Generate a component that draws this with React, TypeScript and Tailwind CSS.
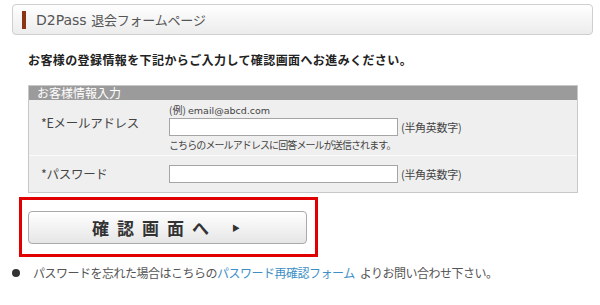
import React from "react";

const jp = { fontFamily: '"Noto Sans CJK JP", "DejaVu Sans", sans-serif' };

function Row({ label, children, last, labelPad }: { label: string; children: React.ReactNode; last?: boolean; labelPad: string }) {
    return (
        <div className={`flex ${last ? "" : "border-b border-[#fbfbfb]"}`}>
            <div className={`w-[140px] pl-[12px] text-[12.5px] leading-[16px] tracking-[-0.3px] text-[#444] ${labelPad}`}>{label}</div>
            <div className="flex-1">{children}</div>
        </div>
    );
}

function Field() {
    return (
        <div className="flex items-center">
            <input className="w-[229px] h-[18px] bg-white border border-[#a5a5a5] outline-none" />
            <span className="ml-[3px] text-[11px] text-[#444] tracking-[-0.3px]">(半角英数字)</span>
        </div>
    );
}

export default function App() {
    return (
        <div className="w-[600px] h-[305px] bg-white overflow-hidden pt-[4px]" style={jp}>
            {/* page title */}
            <div className="ml-[12px] w-[581px] h-[31px] border border-[#cfcfcf] rounded-[4px] bg-gradient-to-b from-white to-[#ececec] flex items-center">
                <div className="ml-[9px] w-[4px] h-[18px] bg-[#8b3416]" />
                <div className="ml-[10px] text-[13px] text-[#555] leading-none tracking-[-0.2px]">
                    <span style={{ fontFamily: '"DejaVu Sans", sans-serif' }} className="text-[14px] tracking-normal">D2Pass </span>
                    退会フォームページ
                </div>
            </div>

            <p className="ml-[28px] mt-[18px] h-[14px] leading-[14px] text-[12px] font-bold tracking-[0.4px] text-[#222]">
                お客様の登録情報を下記からご入力して確認画面へお進みください。
            </p>

            {/* form table */}
            <div className="ml-[28px] mt-[18px] w-[550px] border border-[#c8c8c8] bg-[#efefef]">
                <div className="h-[14px] bg-[#9b9b9b] text-white text-[12px] leading-[14px] pl-[8px]">お客様情報入力</div>
                <Row label="*Eメールアドレス" labelPad="pt-[15px]">
                    <div className="pt-[3px] pb-[3px]">
                        <div className="text-[10px] leading-[14px] text-[#444]">
                            (例) <span style={{ fontFamily: '"DejaVu Sans", sans-serif' }} className="text-[9.5px]">email@abcd.com</span>
                        </div>
                        <Field />
                        <div className="mt-[2px] text-[10px] leading-[14px] tracking-[-0.9px] text-[#444]">
                            こちらのメールアドレスに回答メールが送信されます。
                        </div>
                    </div>
                </Row>
                <Row label="*パスワード" last labelPad="pt-[10px]">
                    <div className="py-[9px]">
                        <Field />
                    </div>
                </Row>
            </div>

            {/* highlighted submit */}
            <div className="ml-[19px] mt-[4px] w-[299px] h-[60px] border-[3px] border-[#e00000] pt-[11px] pl-[6px]">
                <button className="w-[279px] h-[33px] rounded-[4px] border border-[#a9a9a9] bg-gradient-to-b from-white to-[#e6e6e6] flex items-center">
                    <span className="ml-[63px] text-[17px] font-bold text-[#333] tracking-[8px] leading-none">確認画面へ</span>
                    <span className="ml-[15px] text-[8px] text-[#333] leading-none">▶</span>
                </button>
            </div>

            <div className="mt-[9px] ml-[12px] flex items-center h-[14px] text-[12px] tracking-[-0.5px] text-[#555]">
                <span className="w-[8px] h-[8px] rounded-full bg-[#333]" />
                <span className="ml-[13px]">パスワードを忘れた場合はこちらの</span>
                <a className="text-[#3d8fc6]">パスワード再確認フォーム</a>
                <span className="ml-[5px]">よりお問い合わせ下さい。</span>
            </div>
        </div>
    );
}
